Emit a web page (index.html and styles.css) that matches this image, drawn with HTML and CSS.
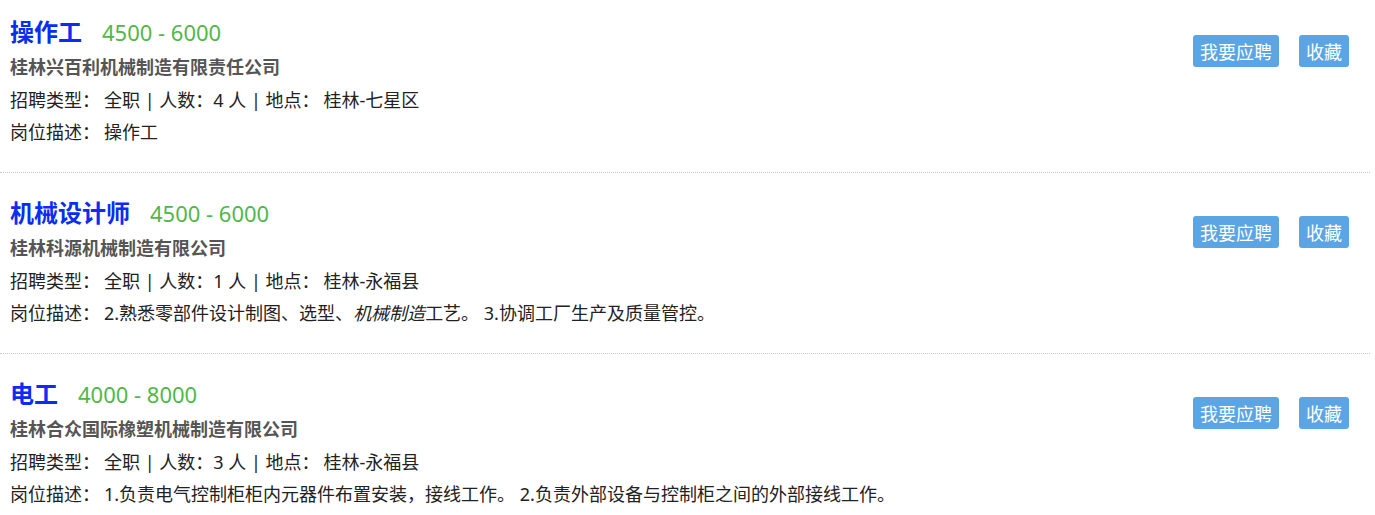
FILE: index.html
```html
<!DOCTYPE html>
<html lang="zh-CN">
<head>
  <meta charset="UTF-8">
  <title>招聘信息</title>
  <link rel="stylesheet" href="styles.css">
</head>
<body>
  <div class="job-list">

    <div class="job-item">
      <div class="job-info">
        <div class="job-title">操作工<span class="salary">4500 - 6000</span></div>
        <div class="company">桂林兴百利机械制造有限责任公司</div>
        <div class="line"><span class="label">招聘类型：</span>全职 | 人数：4 人 | <span class="label">地点：</span>桂林-七星区</div>
        <div class="line"><span class="label">岗位描述：</span>操作工</div>
      </div>
      <div class="actions">
        <button class="btn">我要应聘</button>
        <button class="btn">收藏</button>
      </div>
    </div>

    <div class="job-item">
      <div class="job-info">
        <div class="job-title">机械设计师<span class="salary">4500 - 6000</span></div>
        <div class="company">桂林科源机械制造有限公司</div>
        <div class="line"><span class="label">招聘类型：</span>全职 | 人数：1 人 | <span class="label">地点：</span>桂林-永福县</div>
        <div class="line"><span class="label">岗位描述：</span>2.熟悉零部件设计制图、选型、<em>机械制造</em>工艺。 3.协调工厂生产及质量管控。</div>
      </div>
      <div class="actions">
        <button class="btn">我要应聘</button>
        <button class="btn">收藏</button>
      </div>
    </div>

    <div class="job-item">
      <div class="job-info">
        <div class="job-title">电工<span class="salary">4000 - 8000</span></div>
        <div class="company">桂林合众国际橡塑机械制造有限公司</div>
        <div class="line"><span class="label">招聘类型：</span>全职 | 人数：3 人 | <span class="label">地点：</span>桂林-永福县</div>
        <div class="line"><span class="label">岗位描述：</span>1.负责电气控制柜柜内元器件布置安装，接线工作。 2.负责外部设备与控制柜之间的外部接线工作。</div>
      </div>
      <div class="actions">
        <button class="btn">我要应聘</button>
        <button class="btn">收藏</button>
      </div>
    </div>

  </div>
</body>
</html>
```

FILE: styles.css
```css
body {
  margin: 0;
  font-family: "Noto Sans", "Noto Sans CJK SC", sans-serif;
  color: #222;
  background: #fff;
}
.job-list {
  width: 1370px;
}
.job-item {
  display: flex;
  justify-content: space-between;
  padding: 22px 21px 24px 10px;
  border-bottom: 1px dotted #c8c8c8;
}
.job-item:first-child {
  padding-top: 14px;
}
.job-title {
  font-size: 24px;
  font-weight: bold;
  color: #0a2df5;
  line-height: 36px;
}
.salary {
  font-size: 22px;
  font-weight: normal;
  color: #4fb847;
  margin-left: 20px;
}
.company {
  font-size: 18px;
  font-weight: bold;
  color: #555;
  line-height: 34px;
}
.line {
  font-size: 18px;
  line-height: 32px;
  white-space: nowrap;
}
.label {
  margin-right: 4px;
}
.actions {
  display: flex;
  gap: 20px;
  margin-top: 21px;
  align-self: flex-start;
}
.btn {
  font-family: "Noto Sans CJK SC", sans-serif;
  font-size: 18px;
  line-height: 32px;
  height: 32px;
  padding: 0 7px;
  color: #fff;
  background-color: #5ba5e4;
  border: none;
  border-radius: 3px;
  cursor: pointer;
}
```
